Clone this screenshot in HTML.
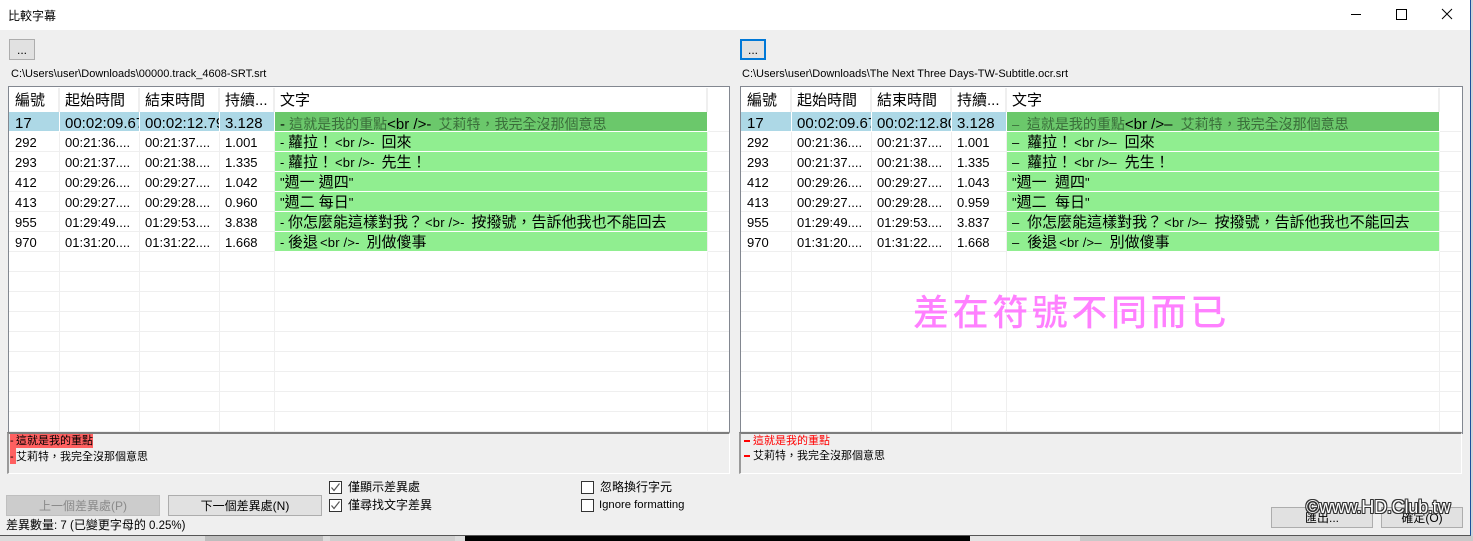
<!DOCTYPE html>
<html lang="zh-Hant"><head><meta charset="utf-8"><title>比較字幕</title>
<style>
html,body{margin:0;padding:0}
body{width:1473px;height:541px;overflow:hidden;position:relative;background:#b9b9b9;font-family:"Liberation Sans","Noto Sans CJK TC",sans-serif;color:#000}
.a{position:absolute;white-space:nowrap}
#win{left:0;top:0;width:1470px;height:535px;background:#efefef;border-right:1px solid #1c4f9c;border-bottom:1px solid #555}
#tb{left:0;top:0;width:1470px;height:30px;background:#fff}
.list{position:absolute;top:86px;width:720px;height:345px;padding-top:1px;background:#fff;border:1px solid #828790;overflow:hidden}
table{border-collapse:separate;border-spacing:0;table-layout:fixed;width:720px}
td,th{height:17px;padding:2px 0 0 5px;overflow:hidden;white-space:nowrap;border-right:1px solid #efefef;border-bottom:1px solid #efefef;font-size:13px;font-weight:400;text-align:left;line-height:17px;box-sizing:content-box}
th{height:23px;font-size:15px;border-bottom:0;border-right:2px solid #efefef;padding:1px 0 0 5px;line-height:23px}
td:first-child,th:first-child{padding-left:6px}
tr.s td{font-size:15px;background:#add8e6;border-right-color:#fff;border-bottom-color:#fff;height:14px;line-height:14px;padding-top:5px}
td.g{background:#90ee90;border-bottom-color:#fff;font-size:15px;border-right-color:#efefef}
tr.s td.g{background:#6bc86b;color:#3a6e3a;font-size:14px}
tr.s td.f,td.f{background:#fff;border-right:0;border-bottom-color:#efefef}
.l,.b{font-size:13px;color:#000;line-height:1}
.b{padding:0 3px 0 2px;letter-spacing:.2px}
tr.s .l,tr.s .b{font-size:15px;letter-spacing:0;padding-left:0;line-height:0}
.d{display:inline-block;width:11px;font-size:13px;line-height:1}
tr.s .d{line-height:0}
.list.r .b{padding-right:4px}
.box{position:absolute;top:432px;width:720px;height:39px;border-top:2px solid #7d7d7d;border-left:2px solid #9a9a9a;border-right:1px solid #fff;border-bottom:1px solid #fff;background:#efefef;font-size:11px}
.btn{position:absolute;box-sizing:border-box;background:#e1e1e1;border:1px solid #adadad;text-align:center;font-size:12px}
.cb{position:absolute;box-sizing:border-box;width:13px;height:13px;background:#fff;border:1px solid #333}
.cb svg{position:absolute;left:0;top:0}
.t{font-size:12px;position:absolute;white-space:nowrap}
#wm{left:1306px;top:496px;font-size:18px;line-height:22px;color:#fff;letter-spacing:-.2px;text-shadow:1px 0 #333,-1px 0 #333,0 1px #333,0 -1px #333,1px 1px #333,-1px -1px #333,1px -1px #333,-1px 1px #333}
</style></head><body>
<div class="a" style="left:0;top:536px;width:465px;height:5px;background:#dcdcdc"></div>
<div class="a" style="left:205px;top:536px;width:118px;height:5px;background:#bdbdbd"></div>
<div class="a" style="left:330px;top:536px;width:125px;height:5px;background:#cfcfcf"></div>
<div class="a" style="left:465px;top:536px;width:505px;height:5px;background:#000"></div>
<div class="a" style="left:970px;top:536px;width:110px;height:5px;background:#e4e4e4"></div>
<div class="a" style="left:1080px;top:536px;width:393px;height:5px;background:#c9c9c9"></div>
<div class="a" style="left:1470px;top:0;width:3px;height:536px;background:#cfd3d8"></div>

<div id="win" class="a"></div>
<div id="tb" class="a"></div>
<div class="a" style="left:8px;top:7px;font-size:12px;line-height:18px">比較字幕</div>
<svg class="a" style="left:1350px;top:8px" width="112" height="14" viewBox="0 0 112 14" fill="none" stroke="#000" stroke-width="1">
<path d="M1 6.5H11"/><rect x="46.5" y="1.5" width="10" height="10"/><path d="M92 1L102 11M102 1L92 11"/></svg>

<div class="btn" style="left:9px;top:39px;width:26px;height:21px;line-height:20px;border:1px solid #adadad">...</div>
<div class="btn" style="left:740px;top:39px;width:26px;height:21px;line-height:18px;border:2px solid #0078d7">...</div>
<div class="t" style="left:11px;top:67px;line-height:14px;font-size:11px">C:\Users\user\Downloads\00000.track_4608-SRT.srt</div>
<div class="t" style="left:742px;top:67px;line-height:14px;font-size:11px">C:\Users\user\Downloads\The Next Three Days-TW-Subtitle.ocr.srt</div>

<div class="list" style="left:8px">
<table><colgroup><col style="width:51px"><col style="width:80px"><col style="width:80px"><col style="width:55px"><col style="width:433px"><col></colgroup>
<tr><th>編號</th><th>起始時間</th><th>結束時間</th><th>持續...</th><th>文字</th><th style="border-right:0"></th></tr>
<tr class="s"><td>17</td><td>00:02:09.678</td><td>00:02:12.799</td><td>3.128</td><td class="g"><span class="l">- </span>這就是我的重點<span class="b">&lt;br /&gt;- </span>艾莉特，我完全沒那個意思</td><td class="f"></td></tr>
<tr><td>292</td><td>00:21:36....</td><td>00:21:37....</td><td>1.001</td><td class="g"><span class="l">- </span>蘿拉！<span class="b">&lt;br /&gt;- </span>回來</td><td class="f"></td></tr>
<tr><td>293</td><td>00:21:37....</td><td>00:21:38....</td><td>1.335</td><td class="g"><span class="l">- </span>蘿拉！<span class="b">&lt;br /&gt;- </span>先生！</td><td class="f"></td></tr>
<tr><td>412</td><td>00:29:26....</td><td>00:29:27....</td><td>1.042</td><td class="g"><span class="l">"</span>週一 週四<span class="l">"</span></td><td class="f"></td></tr>
<tr><td>413</td><td>00:29:27....</td><td>00:29:28....</td><td>0.960</td><td class="g"><span class="l">"</span>週二 每日<span class="l">"</span></td><td class="f"></td></tr>
<tr><td>955</td><td>01:29:49....</td><td>01:29:53....</td><td>3.838</td><td class="g"><span class="l">- </span>你怎麼能這樣對我？<span class="b">&lt;br /&gt;- </span>按撥號，告訴他我也不能回去</td><td class="f"></td></tr>
<tr><td>970</td><td>01:31:20....</td><td>01:31:22....</td><td>1.668</td><td class="g"><span class="l">- </span>後退<span class="b">&lt;br /&gt;- </span>別做傻事</td><td class="f"></td></tr>
<tr><td></td><td></td><td></td><td></td><td></td><td class="f"></td></tr>
<tr><td></td><td></td><td></td><td></td><td></td><td class="f"></td></tr>
<tr><td></td><td></td><td></td><td></td><td></td><td class="f"></td></tr>
<tr><td></td><td></td><td></td><td></td><td></td><td class="f"></td></tr>
<tr><td></td><td></td><td></td><td></td><td></td><td class="f"></td></tr>
<tr><td></td><td></td><td></td><td></td><td></td><td class="f"></td></tr>
<tr><td></td><td></td><td></td><td></td><td></td><td class="f"></td></tr>
<tr><td></td><td></td><td></td><td></td><td></td><td class="f"></td></tr>
<tr><td></td><td></td><td></td><td></td><td></td><td class="f"></td></tr>
</table></div>

<div class="list r" style="left:740px;width:721px">
<table><colgroup><col style="width:51px"><col style="width:80px"><col style="width:80px"><col style="width:55px"><col style="width:433px"><col></colgroup>
<tr><th>編號</th><th>起始時間</th><th>結束時間</th><th>持續...</th><th>文字</th><th style="border-right:0"></th></tr>
<tr class="s"><td>17</td><td>00:02:09.678</td><td>00:02:12.800</td><td>3.128</td><td class="g"><span class="d">–</span> 這就是我的重點<span class="b">&lt;br /&gt;– </span>艾莉特，我完全沒那個意思</td><td class="f"></td></tr>
<tr><td>292</td><td>00:21:36....</td><td>00:21:37....</td><td>1.001</td><td class="g"><span class="d">–</span> 蘿拉！<span class="b">&lt;br /&gt;– </span>回來</td><td class="f"></td></tr>
<tr><td>293</td><td>00:21:37....</td><td>00:21:38....</td><td>1.335</td><td class="g"><span class="d">–</span> 蘿拉！<span class="b">&lt;br /&gt;– </span>先生！</td><td class="f"></td></tr>
<tr><td>412</td><td>00:29:26....</td><td>00:29:27....</td><td>1.043</td><td class="g"><span class="l">"</span>週一&nbsp; 週四<span class="l">"</span></td><td class="f"></td></tr>
<tr><td>413</td><td>00:29:27....</td><td>00:29:28....</td><td>0.959</td><td class="g"><span class="l">"</span>週二&nbsp; 每日<span class="l">"</span></td><td class="f"></td></tr>
<tr><td>955</td><td>01:29:49....</td><td>01:29:53....</td><td>3.837</td><td class="g"><span class="d">–</span> 你怎麼能這樣對我？<span class="b">&lt;br /&gt;– </span>按撥號，告訴他我也不能回去</td><td class="f"></td></tr>
<tr><td>970</td><td>01:31:20....</td><td>01:31:22....</td><td>1.668</td><td class="g"><span class="d">–</span> 後退<span class="b">&lt;br /&gt;– </span>別做傻事</td><td class="f"></td></tr>
<tr><td></td><td></td><td></td><td></td><td></td><td class="f"></td></tr>
<tr><td></td><td></td><td></td><td></td><td></td><td class="f"></td></tr>
<tr><td></td><td></td><td></td><td></td><td></td><td class="f"></td></tr>
<tr><td></td><td></td><td></td><td></td><td></td><td class="f"></td></tr>
<tr><td></td><td></td><td></td><td></td><td></td><td class="f"></td></tr>
<tr><td></td><td></td><td></td><td></td><td></td><td class="f"></td></tr>
<tr><td></td><td></td><td></td><td></td><td></td><td class="f"></td></tr>
<tr><td></td><td></td><td></td><td></td><td></td><td class="f"></td></tr>
<tr><td></td><td></td><td></td><td></td><td></td><td class="f"></td></tr>
</table></div>

<div class="a" style="left:913px;top:287px;font-family:'Noto Sans CJK TC',sans-serif;font-size:36px;line-height:46px;letter-spacing:3.6px;color:#ff80ff;font-weight:500">差在符號不同而已</div>

<div class="box" style="left:7px"></div>
<div class="box" style="left:739px"></div>
<div class="a" style="left:10px;top:434px;width:83px;height:14px;background:#ff6060"></div>
<div class="a" style="left:10px;top:448px;width:6px;height:16px;background:#ff6060"></div>
<div class="t" style="left:10px;top:434px;font-size:11px;line-height:15px">-</div>
<div class="t" style="left:16px;top:434px;font-size:11px;line-height:15px">這就是我的重點</div>
<div class="t" style="left:10px;top:450px;font-size:11px;line-height:15px">-</div>
<div class="t" style="left:16px;top:450px;font-size:11px;line-height:15px">艾莉特，我完全沒那個意思</div>
<div class="a" style="left:744px;top:440px;width:6px;height:2px;background:#f00"></div>
<div class="a" style="left:744px;top:455px;width:6px;height:2px;background:#f00"></div>
<div class="t" style="left:753px;top:434px;font-size:11px;line-height:15px;color:#f00">這就是我的重點</div>
<div class="t" style="left:753px;top:449px;font-size:11px;line-height:15px">艾莉特，我完全沒那個意思</div>

<div class="btn" style="left:6px;top:495px;width:154px;height:21px;line-height:20px;background:#ccc;border-color:#bfbfbf;color:#8a8a8a">上一個差異處(P)</div>
<div class="btn" style="left:168px;top:495px;width:154px;height:21px;line-height:20px">下一個差異處(N)</div>
<div class="t" style="left:6px;top:518px;line-height:15px">差異數量<span style="font-size:11.5px">: 7 (</span>已變更字母的<span style="font-size:11.5px"> 0.25%)</span></div>

<div class="cb" style="left:329px;top:481px"><svg width="11" height="11" viewBox="0 0 11 11" fill="none" stroke="#555" stroke-width="1.2"><path d="M1.5 5.5L4 8.5L9.5 1.5"/></svg></div>
<div class="cb" style="left:329px;top:499px"><svg width="11" height="11" viewBox="0 0 11 11" fill="none" stroke="#555" stroke-width="1.2"><path d="M1.5 5.5L4 8.5L9.5 1.5"/></svg></div>
<div class="t" style="left:348px;top:480px;line-height:15px">僅顯示差異處</div>
<div class="t" style="left:348px;top:498px;line-height:15px">僅尋找文字差異</div>
<div class="cb" style="left:581px;top:481px"></div>
<div class="cb" style="left:581px;top:499px"></div>
<div class="t" style="left:600px;top:480px;line-height:15px">忽略換行字元</div>
<div class="t" style="left:599px;top:498px;line-height:15px;font-size:11.3px">Ignore formatting</div>

<div class="btn" style="left:1271px;top:507px;width:102px;height:21px;line-height:21px">匯出...</div>
<div class="btn" style="left:1381px;top:507px;width:82px;height:21px;line-height:21px">確定(O)</div>
<div id="wm" class="a">©www.HD.Club.tw</div>
</body></html>
